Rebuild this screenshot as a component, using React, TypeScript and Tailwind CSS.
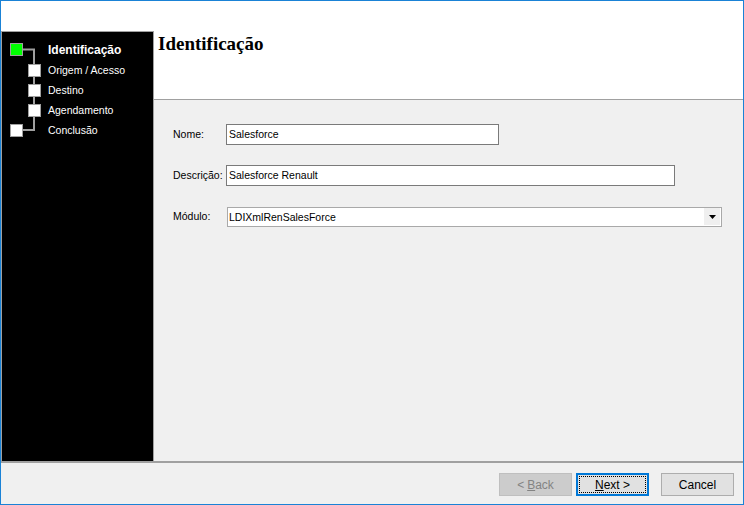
import React from "react";

function Tree() {
  return (
    <svg className="absolute left-0 top-0" width="50" height="110" viewBox="0 0 50 110">
      <path d="M20 17.5 H32 V98 H20" fill="none" stroke="#a0a0a0" strokeWidth="2" />
      <rect x="8.5" y="11.5" width="12" height="12" fill="#00ff00" stroke="#a0a0a0" strokeWidth="1" />
      <rect x="26.5" y="32.5" width="12" height="12" fill="#ffffff" stroke="#a0a0a0" strokeWidth="1" />
      <rect x="26.5" y="52.5" width="12" height="12" fill="#ffffff" stroke="#a0a0a0" strokeWidth="1" />
      <rect x="26.5" y="72.5" width="12" height="12" fill="#ffffff" stroke="#a0a0a0" strokeWidth="1" />
      <rect x="8.5" y="92.5" width="12" height="12" fill="#ffffff" stroke="#a0a0a0" strokeWidth="1" />
    </svg>
  );
}

export default function App() {
  const steps = ["Origem / Acesso", "Destino", "Agendamento", "Conclusão"];
  return (
    <div className="w-[744px] h-[505px] border border-[#1a82d6] bg-white flex flex-col font-['Liberation_Sans',_Arial,_sans-serif] text-[10.5px] text-black overflow-hidden">
      <div className="flex h-[460px]">
        <div className="w-[153px] flex flex-col">
          <div className="h-[30px] bg-white" />
          <div className="relative flex-1 bg-black border-t border-l border-r border-[#a0a0a0]">
            <Tree />
            <div className="pt-[8px] pl-[46px] text-white">
              <div className="h-[20px] leading-[20px] font-bold text-[12px]">Identificação</div>
              {steps.map((s) => (
                <div key={s} className="h-[20px] leading-[20px]">
                  {s}
                </div>
              ))}
            </div>
          </div>
        </div>
        <div className="flex-1 flex flex-col">
          <div className="h-[99px] bg-white border-b border-[#a0a0a0] pt-[32px] pl-[4px]">
            <div className="font-['Liberation_Serif',_serif] font-bold text-[19px] leading-[22px]">Identificação</div>
          </div>
          <div className="flex-1 bg-[#f0f0f0] pt-[24px] pl-[19px] flex flex-col gap-[20px]">
            <div className="flex items-center h-[21px]">
              <div className="w-[53px]">Nome:</div>
              <div className="w-[273px] h-[21px] bg-white border border-[#7a7a7a] pl-[2px] leading-[19px]">Salesforce</div>
            </div>
            <div className="flex items-center h-[21px]">
              <div className="w-[53px] whitespace-nowrap">Descrição:</div>
              <div className="w-[449px] h-[21px] bg-white border border-[#7a7a7a] pl-[2px] leading-[19px]">Salesforce Renault</div>
            </div>
            <div className="flex items-center h-[21px]">
              <div className="w-[54px]">Módulo:</div>
              <div className="w-[495px] h-[20px] bg-white border border-[#a9a9a9] pl-[1px] flex items-center justify-between">
                <span className="leading-[18px]">LDIXmlRenSalesForce</span>
                <div className="w-[16px] h-[17px] mr-[1px] bg-[#efefef] flex items-center justify-center">
                  <svg width="7" height="4" viewBox="0 0 7 4">
                    <polygon points="0,0 7,0 3.5,4" fill="#000" />
                  </svg>
                </div>
              </div>
            </div>
          </div>
        </div>
      </div>
      <div className="h-[2px] bg-[#a0a0a0]" />
      <div className="flex-1 bg-[#f0f0f0] flex justify-end items-start pt-[10px] pr-[9px]">
        <div className="w-[73px] h-[23px] bg-[#cccccc] border border-[#bfbfbf] text-[#838383] text-[12px] flex items-center justify-center">
          &lt; <span className="underline ml-[3px]">B</span>ack
        </div>
        <div className="ml-[4px] w-[73px] h-[23px] bg-[#e1e1e1] border-2 border-[#0078d7] p-[1px]">
          <div className="w-full h-full border border-dotted border-black text-[12px] flex items-center justify-center">
            <span className="underline">N</span>ext &gt;
          </div>
        </div>
        <div className="ml-[12px] w-[73px] h-[23px] bg-[#e1e1e1] border border-[#adadad] text-[12px] flex items-center justify-center">
          Cancel
        </div>
      </div>
    </div>
  );
}
